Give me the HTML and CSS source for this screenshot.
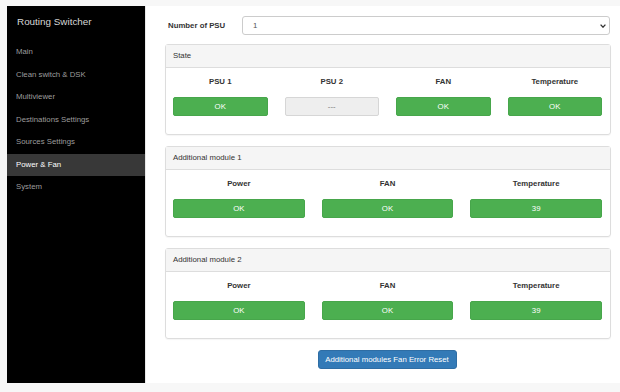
FILE: index.html
```html
<!DOCTYPE html>
<html lang="en">
<head>
    <meta charset="UTF-8">
    <title>Routing Switcher - Power &amp; Fan</title>
    <link rel="stylesheet" href="styles.css">
</head>
<body>
    <div class="page">
        <!-- Sidebar -->
        <nav class="sidebar">
            <div class="brand">Routing Switcher</div>
            <a href="#">Main</a>
            <a href="#">Clean switch &amp; DSK</a>
            <a href="#">Multiviewer</a>
            <a href="#">Destinations Settings</a>
            <a href="#">Sources Settings</a>
            <a href="#" class="active">Power &amp; Fan</a>
            <a href="#">System</a>
        </nav>

        <!-- Main Content -->
        <div class="content">
            <div class="form-row">
                <label for="psu-count">Number of PSU</label>
                <div class="select-wrap">
                    <select id="psu-count">
                        <option>1</option>
                        <option>2</option>
                    </select>
                    <svg class="chevron" width="6" height="4" viewBox="0 0 6 4">
                        <path d="M0.6 0.6 L3 3.2 L5.4 0.6" fill="none" stroke="#333" stroke-width="1.3"/>
                    </svg>
                </div>
            </div>

            <div class="panel">
                <div class="panel-heading">State</div>
                <div class="panel-body cols-4">
                    <div class="cell"><span class="cell-label">PSU 1</span><button class="state ok">OK</button></div>
                    <div class="cell"><span class="cell-label">PSU 2</span><button class="state off">---</button></div>
                    <div class="cell"><span class="cell-label">FAN</span><button class="state ok">OK</button></div>
                    <div class="cell"><span class="cell-label">Temperature</span><button class="state ok">OK</button></div>
                </div>
            </div>

            <div class="panel">
                <div class="panel-heading">Additional module 1</div>
                <div class="panel-body cols-3">
                    <div class="cell"><span class="cell-label">Power</span><button class="state ok">OK</button></div>
                    <div class="cell"><span class="cell-label">FAN</span><button class="state ok">OK</button></div>
                    <div class="cell"><span class="cell-label">Temperature</span><button class="state ok">39</button></div>
                </div>
            </div>

            <div class="panel">
                <div class="panel-heading">Additional module 2</div>
                <div class="panel-body cols-3">
                    <div class="cell"><span class="cell-label">Power</span><button class="state ok">OK</button></div>
                    <div class="cell"><span class="cell-label">FAN</span><button class="state ok">OK</button></div>
                    <div class="cell"><span class="cell-label">Temperature</span><button class="state ok">39</button></div>
                </div>
            </div>

            <div class="actions">
                <button class="reset-button">Additional modules Fan Error Reset</button>
            </div>
        </div>
    </div>
</body>
</html>
```

FILE: styles.css
```css
/* General Styles */
body {
    font-family: 'Liberation Sans', Arial, sans-serif;
    font-size: 7.8px;
    color: #333333;
    background-color: #f7f7f7;
    margin: 0;
    padding: 6px 0 0 7px;
}
.page {
    display: flex;
    height: 377px;
}
/* Sidebar Styles */
.sidebar {
    width: 138px;
    background-color: #000000;
    display: flex;
    flex-direction: column;
}
.sidebar .brand {
    color: #d8d8d8;
    font-size: 9.9px;
    line-height: 12px;
    padding: 10px 10px 13px 10px;
}
.sidebar a {
    color: #9d9d9d;
    text-decoration: none;
    line-height: 22.5px;
    padding: 0 9px;
}
.sidebar a.active {
    color: #ffffff;
    background-color: #383838;
}
/* Content Styles */
.content {
    flex: 1;
    background-color: #ffffff;
    border-left: 1px solid #e8e8e8;
    padding: 10px 9px 0 19px;
}
.form-row {
    display: flex;
    align-items: center;
    height: 19px;
    margin-bottom: 9px;
}
.form-row label {
    font-weight: bold;
    width: 74px;
    padding-left: 3px;
}
.select-wrap {
    position: relative;
    flex: 1;
    margin-right: 1px;
}
.select-wrap select {
    appearance: none;
    -webkit-appearance: none;
    width: 100%;
    height: 19px;
    border: 1px solid #cccccc;
    border-radius: 3px;
    background-color: #ffffff;
    font-family: inherit;
    font-size: 7.8px;
    color: #555555;
    padding: 0 10px;
}
.select-wrap .chevron {
    position: absolute;
    right: 4px;
    top: 8px;
}
/* Panels */
.panel {
    border: 1px solid #dddddd;
    border-radius: 3px;
    margin-bottom: 11px;
    box-shadow: 0 1px 1px rgba(0, 0, 0, 0.04);
}
.panel-heading {
    background-color: #f5f5f5;
    border-bottom: 1px solid #dddddd;
    height: 22px;
    line-height: 22px;
    padding: 0 7px;
    color: #333333;
}
.panel-body {
    display: grid;
    gap: 17px;
    padding: 8px 8px 18px 7px;
}
.cols-4 {
    grid-template-columns: repeat(4, 1fr);
}
.cols-3 {
    grid-template-columns: repeat(3, 1fr);
}
.cell {
    display: flex;
    flex-direction: column;
    align-items: stretch;
    text-align: center;
}
.cell-label {
    font-weight: bold;
    line-height: 12px;
    margin-bottom: 9px;
}
.state {
    height: 19px;
    border-radius: 2px;
    font-family: inherit;
    font-size: 7.8px;
    padding: 0;
}
.state.ok {
    background-color: #4caf50;
    border: 1px solid #47a64b;
    color: #ffffff;
}
.state.off {
    background-color: #eeeeee;
    border: 1px solid #d6d6d6;
    color: #777777;
}
.actions {
    text-align: center;
    padding-right: 2px;
}
.reset-button {
    background-color: #337ab7;
    border: 1px solid #2e6da4;
    border-radius: 3px;
    color: #ffffff;
    font-family: inherit;
    font-size: 7.8px;
    height: 19px;
    width: 139px;
    padding: 0;
    cursor: pointer;
}
.reset-button:hover {
    background-color: #286090;
}
```
